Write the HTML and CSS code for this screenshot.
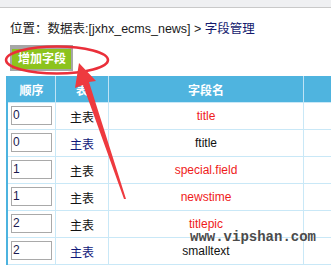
FILE: index.html
```html
<!DOCTYPE html>
<html lang="zh-CN">
<head>
<meta charset="utf-8">
<title>字段管理</title>
<link rel="stylesheet" href="styles.css">
</head>
<body>
<div class="topbar"></div>
<div class="crumb">位置：数据表:[jxhx_ecms_news] &gt; <span class="here">字段管理</span></div>
<div class="actions"><span class="btn">增加字段</span></div>
<div class="grid">
  <div class="th">顺序</div><div class="th">表</div><div class="th">字段名</div><div class="th"></div>

  <div class="td"><span class="inp">0</span></div><div class="td">主表</div><div class="td red">title</div><div class="td"></div>
  <div class="td"><span class="inp">0</span></div><div class="td navy">主表</div><div class="td">ftitle</div><div class="td"></div>
  <div class="td"><span class="inp">1</span></div><div class="td">主表</div><div class="td red">special.field</div><div class="td"></div>
  <div class="td"><span class="inp">1</span></div><div class="td">主表</div><div class="td red">newstime</div><div class="td"></div>
  <div class="td"><span class="inp">2</span></div><div class="td">主表</div><div class="td red">titlepic</div><div class="td"></div>
  <div class="td"><span class="inp">2</span></div><div class="td navy">主表</div><div class="td">smalltext</div><div class="td"></div>
</div>

<svg class="marks" width="331" height="266" viewBox="0 0 331 266">
  <ellipse cx="57" cy="60" rx="51" ry="13.5" fill="none" stroke="#ea2f3a" stroke-width="2.5"/>
  <polygon fill="#ee3a3f" points="79,63 96,81 89,82 126,199 124,199 83,85 75,88"/>
</svg>
<div class="watermark">www.vipshan.com</div>
</body>
</html>
```
FILE: styles.css
```css
html, body {
  margin: 0;
  padding: 0;
  overflow: hidden;
  width: 331px;
  height: 266px;
  background: #fff;
}
body {
  position: relative;
  font-family: "Liberation Sans", "Noto Sans CJK SC", sans-serif;
  font-size: 12px;
  color: #111;
}
.topbar {
  height: 7px;
  background: #eff0f2;
  border-bottom: 1px solid #c9c9c9;
}
.crumb {
  margin-top: 12px;
  padding-left: 10px;
  height: 18px;
  line-height: 18px;
  font-size: 12.5px;
  white-space: nowrap;
  color: #1a1a1a;
}
.crumb .here {
  color: #141a6e;
}
.actions {
  margin-top: 7px;
  padding-left: 10px;
  height: 26px;
}
.btn {
  display: inline-block;
  box-sizing: border-box;
  height: 26px;
  border: 2px solid #a6a6a6;
  border-top-width: 4px;
  background: #8cc31d;
  color: #fff;
  font-weight: bold;
  line-height: 20px;
  padding: 0 5px 0 6px;
  white-space: nowrap;
}
.grid {
  display: grid;
  grid-template-columns: 48px 53px 195px 27px;
  grid-auto-rows: 27px;
  margin-top: 5px;
  margin-left: 6px;
  width: 323px;
  border-left: 2px solid #4cb3df;
}
.th, .td {
  box-sizing: border-box;
  border-right: 1px solid #c9e8f7;
  border-bottom: 1px solid #c9e8f7;
  display: flex;
  align-items: center;
  justify-content: center;
  white-space: nowrap;
}
.grid > div:nth-child(4n) {
  border-right: 0;
}
.th {
  background: #4fb4df;
  color: #fff;
  font-weight: bold;
  border-right-color: #bfe3f5;
}
.td {
  background: #fff;
  color: #111;
}
.td.red { color: #ef1b1b; }
.td.navy { color: #10187a; }
.grid .td:nth-child(4n+1) {
  justify-content: flex-start;
  padding-left: 3px;
  align-items: flex-start;
  padding-top: 3px;
}
.inp {
  box-sizing: border-box;
  display: block;
  width: 41px;
  height: 19px;
  border: 1px solid #a9a9a9;
  padding-left: 1px;
  line-height: 17px;
  color: #1a1a50;
}
.marks {
  position: absolute;
  left: 0;
  top: 0;
  pointer-events: none;
}
.watermark {
  position: absolute;
  left: 190px;
  top: 232px;
  font-family: "Liberation Mono", monospace;
  font-weight: bold;
  font-size: 14px;
  line-height: 10px;
  color: #4b4b4b;
  text-shadow: 0 0 1px #fff;
  white-space: nowrap;
}
```
